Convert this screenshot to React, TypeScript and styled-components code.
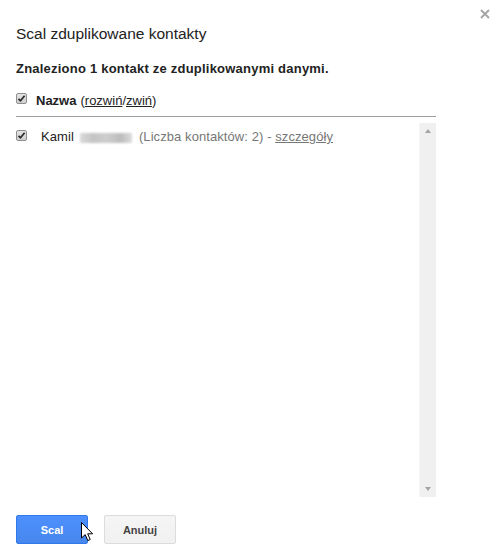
import React from 'react';
import { styled, createGlobalStyle } from 'styled-components';

const GlobalStyle = createGlobalStyle`
    body {
        margin: 0;
        background: #fff;
        font-family: "Liberation Sans", Arial, sans-serif;
        color: #222;
    }
`

const Dialog = styled.div`
    position: relative;
    width: 504px;
    height: 555px;
    box-sizing: border-box;
    padding: 24px 68px 0 16px;
    display: flex;
    flex-direction: column;
    background: #fff;
`

const Close = styled.div`
    position: absolute;
    top: 8px;
    right: 13px;
    width: 12px;
    height: 12px;
    display: flex;
    align-items: center;
    justify-content: center;
`

const Title = styled.div`
    font-size: 15.5px;
    line-height: 20px;
    color: #222;
`

const Summary = styled.div`
    margin-top: 17px;
    font-size: 13px;
    line-height: 16px;
    font-weight: bold;
    letter-spacing: 0.22px;
    color: #222;
`

const GroupHeader = styled.div`
    margin-top: 16px;
    padding-bottom: 7px;
    border-bottom: 1px solid #a0a0a0;
    display: flex;
    align-items: flex-start;
    font-size: 13px;
    line-height: 16px;
`

const Box = styled.span<{ $gap: number; $top: number }>`
    flex: none;
    width: 11px;
    height: 11px;
    margin-top: ${ p => p.$top }px;
    margin-right: ${ p => p.$gap }px;
    box-sizing: border-box;
    border: 1px solid #8f8f8f;
    border-radius: 2px;
    background: linear-gradient(#e4e4e4, #cfcfcf);
    display: flex;
    align-items: center;
    justify-content: center;
`

const Bold = styled.span`
    font-weight: bold;
    margin-right: 4px;
`

const Link = styled.span<{ $muted?: boolean }>`
    text-decoration: underline;
    color: ${ p => p.$muted ? '#777' : '#222' };
`

const ListBox = styled.div`
    margin-top: 6px;
    height: 374px;
    display: flex;
`

const Rows = styled.div`
    flex: 1;
    padding-top: 6px;
`

const Row = styled.div`
    display: flex;
    align-items: flex-start;
    font-size: 13px;
    line-height: 16px;
    letter-spacing: 0.08px;
    color: #222;
`

const Blurred = styled.span`
    display: inline-block;
    width: 52px;
    height: 10px;
    margin: 4px 7px 0 6px;
    background: linear-gradient(90deg, #dadada, #c4c4c4 25%, #cecece 50%, #bdbdbd 78%, #dcdcdc);
    filter: blur(1px);
`

const Muted = styled.span`
    color: #777;
`

const ScrollBar = styled.div`
    width: 17px;
    flex: none;
    background: #f0f0f0;
    border-left: 1px solid #f6f6f6;
    display: flex;
    flex-direction: column;
    justify-content: space-between;
    align-items: center;
    padding: 6px 0;
    box-sizing: border-box;
`

const Arrow = styled.span<{ $down?: boolean }>`
    width: 0;
    height: 0;
    border-left: 3.5px solid transparent;
    border-right: 3.5px solid transparent;
    ${ p => p.$down ? 'border-top: 4px solid #a3a3a3;' : 'border-bottom: 4px solid #a3a3a3;' }
`

const Buttons = styled.div`
    margin-top: 18px;
    display: flex;
    gap: 16px;
`

const Button = styled.div<{ $primary?: boolean }>`
    position: relative;
    width: 72px;
    height: 29px;
    box-sizing: border-box;
    border-radius: 2px;
    border: 1px solid ${ p => p.$primary ? '#3079ed' : '#dcdcdc' };
    background: ${ p => p.$primary
        ? 'linear-gradient(#4d90fe, #4787ed)'
        : 'linear-gradient(#f5f5f5, #f1f1f1)' };
    color: ${ p => p.$primary ? '#fff' : '#444' };
    font-size: 11px;
    font-weight: bold;
    display: flex;
    align-items: center;
    justify-content: center;
`

const Cursor = styled.svg`
    position: absolute;
    left: 64px;
    top: 6px;
`

const Check = () => (
    <svg width="9" height="9" viewBox="0 0 9 9">
        <path d="M1.5 4.8 L3.5 6.8 L7.6 1.8" fill="none" stroke="#2a2a2a" strokeWidth="1.7" />
    </svg>
);

const App = () => {
    return (
        <>
            <GlobalStyle />
            <Dialog>
                <Close>
                    <svg width="10" height="10" viewBox="0 0 10 10">
                        <path d="M1 1 L9 9 M9 1 L1 9" stroke="#a6a6a6" strokeWidth="2" />
                    </svg>
                </Close>
                <Title>Scal zduplikowane kontakty</Title>
                <Summary>Znaleziono 1 kontakt ze zduplikowanymi danymi.</Summary>
                <GroupHeader>
                    <Box $gap={9} $top={0}><Check /></Box>
                    <Bold>Nazwa</Bold>
                    <span>(<Link>rozwiń</Link>/<Link>zwiń</Link>)</span>
                </GroupHeader>
                <ListBox>
                    <Rows>
                        <Row>
                            <Box $gap={14} $top={1}><Check /></Box>
                            <span>Kamil</span>
                            <Blurred />
                            <Muted>(Liczba kontaktów: 2) - <Link $muted>szczegóły</Link></Muted>
                        </Row>
                    </Rows>
                    <ScrollBar>
                        <Arrow />
                        <Arrow $down />
                    </ScrollBar>
                </ListBox>
                <Buttons>
                    <Button $primary>
                        Scal
                        <Cursor width="13" height="20" viewBox="0 0 13 20">
                            <path d="M0.5 0.5 L0.5 16 L4.2 12.6 L6.8 18.6 L9.2 17.5 L6.7 11.8 L11.6 11.8 Z"
                                fill="#fff" stroke="#000" strokeWidth="1" strokeLinejoin="miter" />
                        </Cursor>
                    </Button>
                    <Button>Anuluj</Button>
                </Buttons>
            </Dialog>
        </>
    );
}

export default App;
